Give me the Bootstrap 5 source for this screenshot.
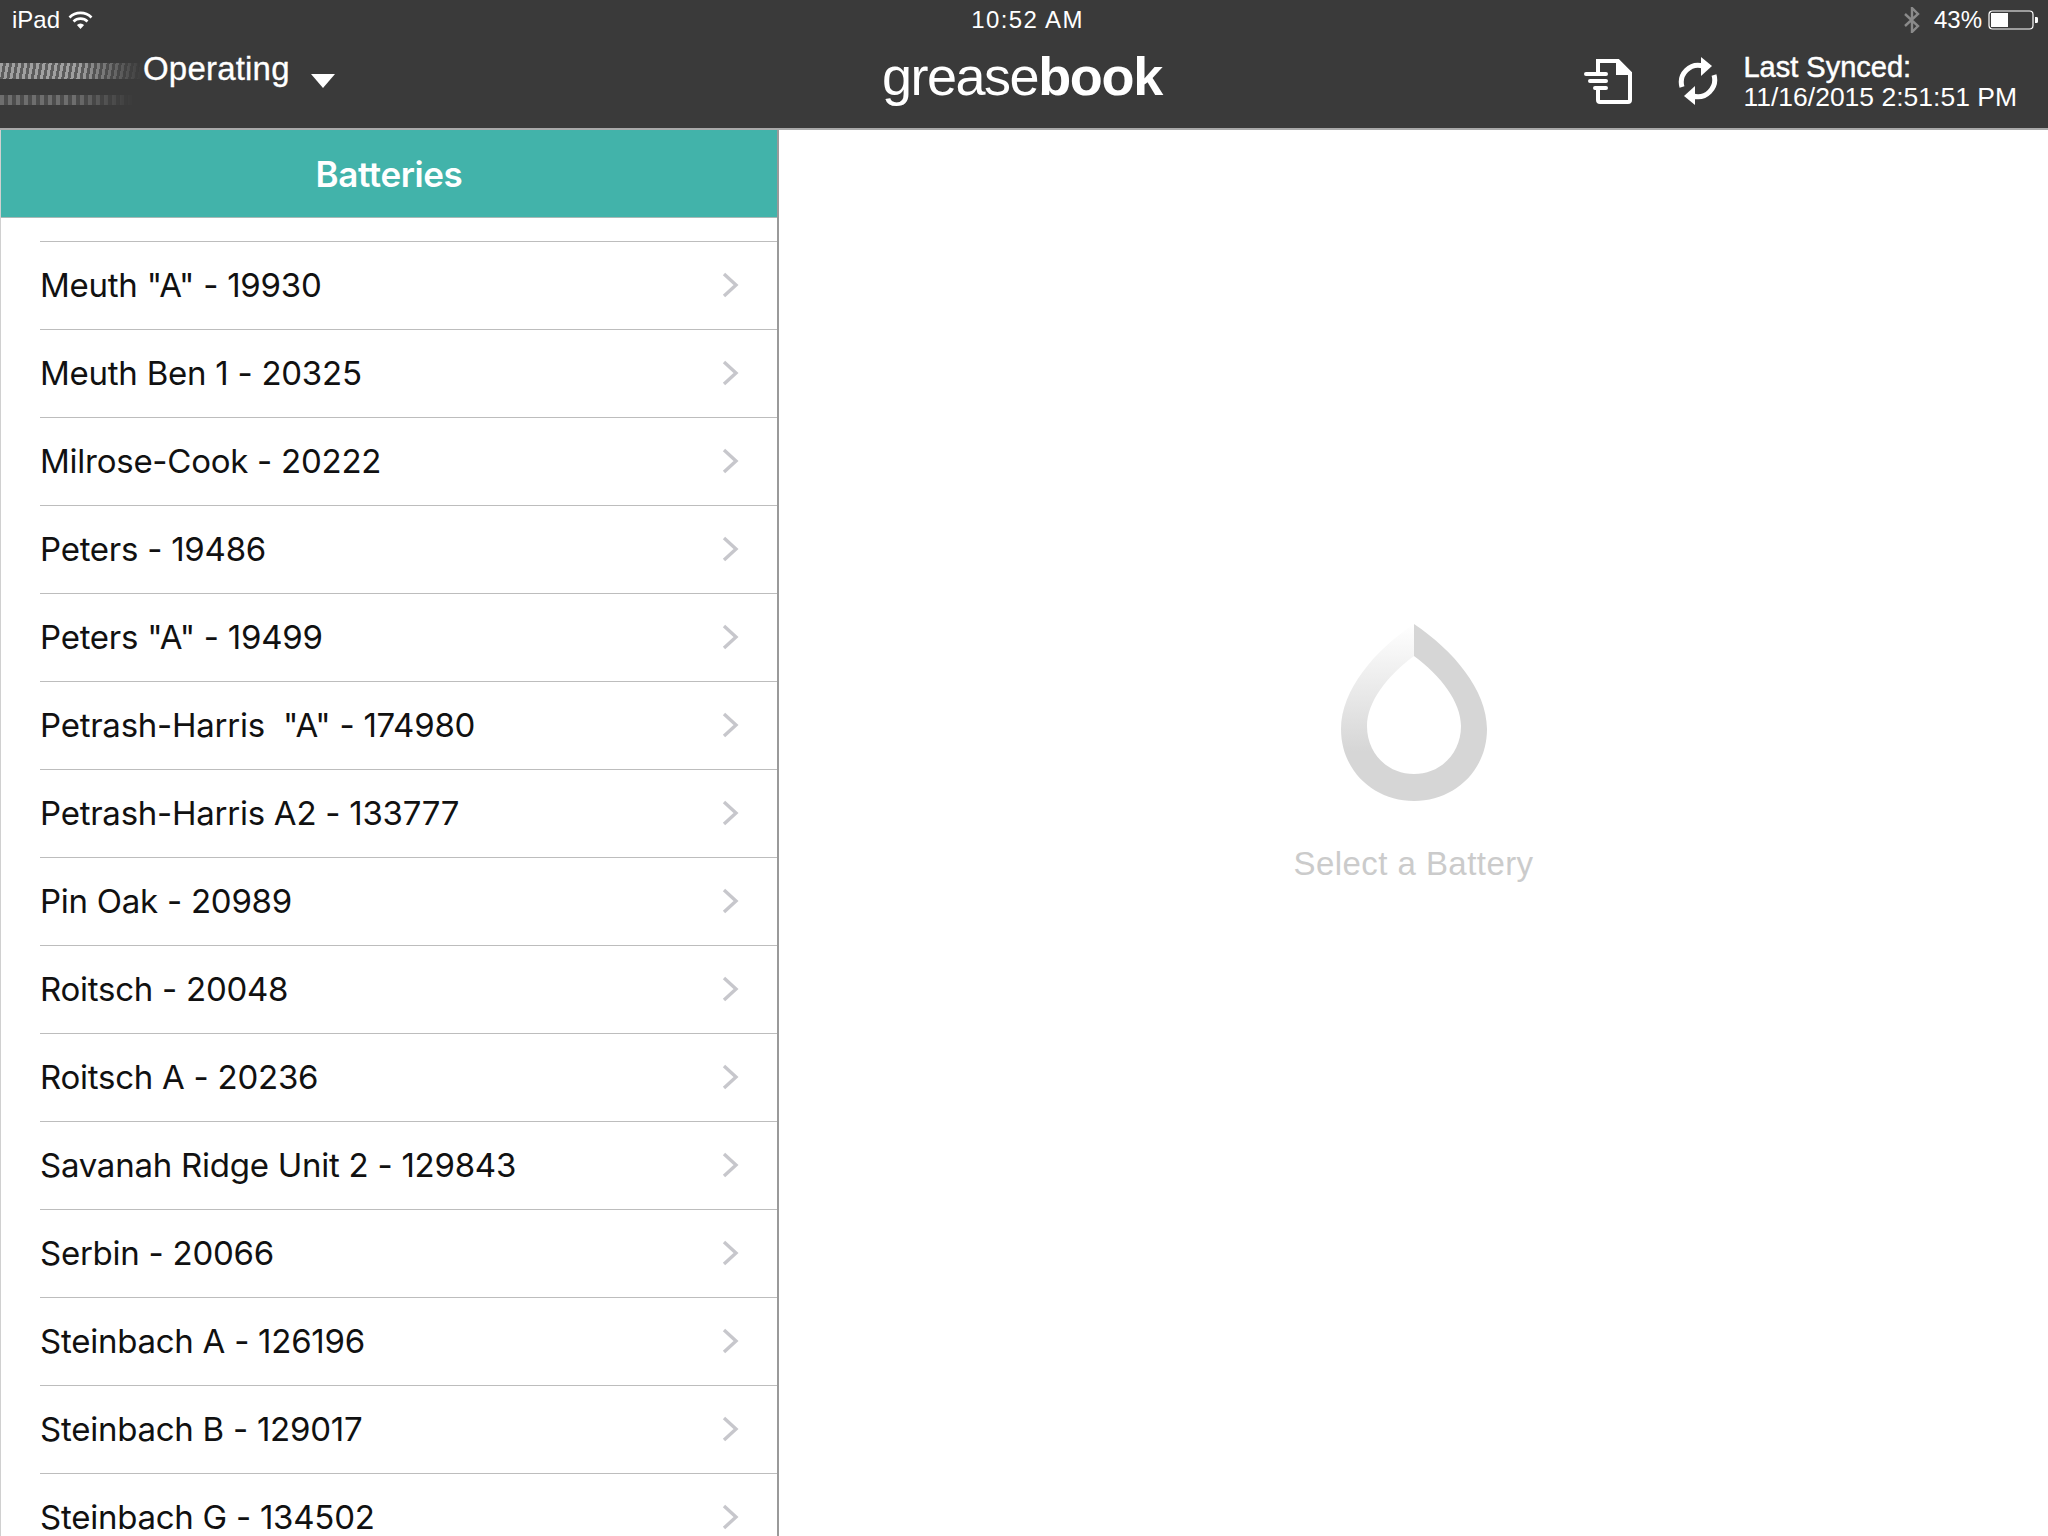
<!DOCTYPE html>
<html lang="en">
<head>
<meta charset="utf-8">
<title>greasebook</title>
<link href="https://cdn.jsdelivr.net/npm/bootstrap@5.3.0/dist/css/bootstrap.min.css" rel="stylesheet">
<style>
html,body{height:1536px;overflow:hidden;background:#fff}
body{font-family:"Liberation Sans",Arial,sans-serif}
.app-top{height:130px;background:#3a3a3a;border-bottom:2px solid #a9a9a9;color:#fff}
.status-row{height:40px;display:grid;grid-template-columns:1fr auto 1fr;padding:0 10px 0 12px;font-size:24px;line-height:40px}
.time-txt{margin-left:5px;letter-spacing:1.4px}
.pct-txt{margin:0 6px 0 14px}
.nav-row{height:88px;display:grid;grid-template-columns:1fr auto 1fr}
.ghost-wrap{width:143px;height:66px;padding-top:23px}
.ghost-a,.ghost-b{display:block;filter:blur(.7px);-webkit-mask-image:linear-gradient(90deg,#000 55%,transparent);mask-image:linear-gradient(90deg,#000 55%,transparent)}
.ghost-a{height:16px;background:repeating-linear-gradient(100deg,#a0a0a0 0 3px,#5c5c5c 3px 6px)}
.ghost-b{height:10px;width:134px;margin-top:16px;background:repeating-linear-gradient(90deg,#6e6e6e 0 4px,#4c4c4c 4px 8px)}
.op-txt{font-size:33px;line-height:36px;margin-top:11px;letter-spacing:.2px;-webkit-text-stroke:.3px #fff}
.caret-down{margin:34px 0 0 21px}
.logo-txt{font-size:54px;line-height:60px;letter-spacing:-1.5px;margin:6px 0 0 -4px}
.logo-txt b{letter-spacing:-1.3px}
.sync-txt{margin-left:24px;margin-right:31px;font-size:26.5px;line-height:30px;padding-top:12px;white-space:nowrap}
.sync-lbl{font-size:29px;line-height:30px;-webkit-text-stroke:.5px #fff}
.doc-ico{margin:18px 0 0 0}
.sync-ico{margin:17px 0 0 43px}
.side-pane{width:779px;height:1406px;overflow:hidden;border-left:1px solid #d0d0d0;border-right:2px solid #9a9a9a}
.side-head{height:88px;background:#42b3aa;color:#fff;font:600 35px/88px Inter,sans-serif;text-align:center;letter-spacing:-.4px;border-bottom:1px solid #a9b9b7}
.bat-list{margin-top:23px;border-radius:0}
.bat-list .bat-item{margin-left:39px;padding:0 37px 2px 0;height:88px;border:0;border-top:1px solid #bdbdbd;border-radius:0;font:400 33px/84px Inter,sans-serif;letter-spacing:-.25px;color:#111;white-space:pre}
.main-pane{height:1406px;padding-top:494px;color:#ccc}
.hint-txt{font-size:33px;line-height:40px;margin-top:43px;letter-spacing:.45px;color:#cbcbcb}
</style>
</head>
<body>
<header class="app-top">
  <div class="status-row">
    <div class="d-flex align-items-center gap-2">
      <span>iPad</span>
      <svg width="25" height="20" viewBox="0 0 25 20" fill="none" stroke="#fff" stroke-width="2.6"><path d="M1.5 7.5a15.500 15.500 0 0 1 22 0"/><path d="M5.5 11.5a10 10 0 0 1 14 0"/><path d="M12.5 19l-3.600-4a5 5 0 0 1 7.200 0z" fill="#fff" stroke="none"/></svg>
    </div>
    <div class="time-txt">10:52 AM</div>
    <div class="d-flex align-items-center justify-content-end">
      <svg width="16" height="26" viewBox="0 0 16 26" fill="none" stroke="#8a8a8a" stroke-width="2.4"><path d="M1 7l13 12-6 6V1l6 6L1 19"/></svg>
      <span class="pct-txt">43%</span>
      <svg width="50" height="20" viewBox="0 0 50 20"><rect x="1" y="1" width="44" height="18" rx="3.5" fill="none" stroke="#fff" stroke-width="1.2"/><rect x="3" y="3" width="17" height="14" fill="#fff"/><path d="M47 7h1.500a1.500 1.500 0 0 1 1.500 1.500v3a1.500 1.500 0 0 1-1.500 1.500H47z" fill="#fff"/></svg>
    </div>
  </div>
  <div class="nav-row">
    <div class="d-flex">
      <div class="ghost-wrap"><span class="ghost-a"></span><span class="ghost-b"></span></div>
      <span class="op-txt">Operating</span>
      <svg class="caret-down" width="24" height="14" viewBox="0 0 24 14"><path d="M0 0h24L12 14z" fill="#fff"/></svg>
    </div>
    <div class="logo-txt">grease<b>book</b></div>
    <div class="d-flex justify-content-end">
      <svg class="doc-ico" width="50" height="46" viewBox="0 0 50 46" fill="none" stroke="#fff"><path d="M14 14V3h20l12 12v27a2 2 0 0 1-2 2H16a2 2 0 0 1-2-2V31" stroke-width="4"/><path d="M32 3v14h14" fill="#fff" stroke="none"/><path d="M2 16h20M6 23h16M11 30h11" stroke-width="4" stroke-linecap="round"/></svg>
      <svg class="sync-ico" width="42" height="48" viewBox="0 0 42 48" fill="none" stroke="#fff" stroke-width="5"><path d="M5 30a17 17 0 0 1 21-21"/><path d="M37 18a17 17 0 0 1-21 21"/><path d="M24 0l11 9-11 10z" fill="#fff" stroke="none"/><path d="M18 48L7 39l11-10z" fill="#fff" stroke="none"/></svg>
      <div class="sync-txt"><div class="sync-lbl">Last Synced:</div><div>11/16/2015 2:51:51 PM</div></div>
    </div>
  </div>
</header>
<div class="d-flex">
  <aside class="side-pane flex-shrink-0">
    <div class="side-head">Batteries</div>
    <div class="list-group bat-list">
      <div class="list-group-item bat-item d-flex justify-content-between align-items-center"><span>Meuth "A" - 19930</span><svg width="18" height="26" viewBox="0 0 18 26" fill="none" stroke="#c7c7cc" stroke-width="3.400"><path d="M2 2l12 11L2 24"/></svg></div>
      <div class="list-group-item bat-item d-flex justify-content-between align-items-center"><span>Meuth Ben 1 - 20325</span><svg width="18" height="26" viewBox="0 0 18 26" fill="none" stroke="#c7c7cc" stroke-width="3.400"><path d="M2 2l12 11L2 24"/></svg></div>
      <div class="list-group-item bat-item d-flex justify-content-between align-items-center"><span>Milrose-Cook - 20222</span><svg width="18" height="26" viewBox="0 0 18 26" fill="none" stroke="#c7c7cc" stroke-width="3.400"><path d="M2 2l12 11L2 24"/></svg></div>
      <div class="list-group-item bat-item d-flex justify-content-between align-items-center"><span>Peters - 19486</span><svg width="18" height="26" viewBox="0 0 18 26" fill="none" stroke="#c7c7cc" stroke-width="3.400"><path d="M2 2l12 11L2 24"/></svg></div>
      <div class="list-group-item bat-item d-flex justify-content-between align-items-center"><span>Peters "A" - 19499</span><svg width="18" height="26" viewBox="0 0 18 26" fill="none" stroke="#c7c7cc" stroke-width="3.400"><path d="M2 2l12 11L2 24"/></svg></div>
      <div class="list-group-item bat-item d-flex justify-content-between align-items-center"><span>Petrash-Harris  "A" - 174980</span><svg width="18" height="26" viewBox="0 0 18 26" fill="none" stroke="#c7c7cc" stroke-width="3.400"><path d="M2 2l12 11L2 24"/></svg></div>
      <div class="list-group-item bat-item d-flex justify-content-between align-items-center"><span>Petrash-Harris A2 - 133777</span><svg width="18" height="26" viewBox="0 0 18 26" fill="none" stroke="#c7c7cc" stroke-width="3.400"><path d="M2 2l12 11L2 24"/></svg></div>
      <div class="list-group-item bat-item d-flex justify-content-between align-items-center"><span>Pin Oak - 20989</span><svg width="18" height="26" viewBox="0 0 18 26" fill="none" stroke="#c7c7cc" stroke-width="3.400"><path d="M2 2l12 11L2 24"/></svg></div>
      <div class="list-group-item bat-item d-flex justify-content-between align-items-center"><span>Roitsch - 20048</span><svg width="18" height="26" viewBox="0 0 18 26" fill="none" stroke="#c7c7cc" stroke-width="3.400"><path d="M2 2l12 11L2 24"/></svg></div>
      <div class="list-group-item bat-item d-flex justify-content-between align-items-center"><span>Roitsch A - 20236</span><svg width="18" height="26" viewBox="0 0 18 26" fill="none" stroke="#c7c7cc" stroke-width="3.400"><path d="M2 2l12 11L2 24"/></svg></div>
      <div class="list-group-item bat-item d-flex justify-content-between align-items-center"><span>Savanah Ridge Unit 2 - 129843</span><svg width="18" height="26" viewBox="0 0 18 26" fill="none" stroke="#c7c7cc" stroke-width="3.400"><path d="M2 2l12 11L2 24"/></svg></div>
      <div class="list-group-item bat-item d-flex justify-content-between align-items-center"><span>Serbin - 20066</span><svg width="18" height="26" viewBox="0 0 18 26" fill="none" stroke="#c7c7cc" stroke-width="3.400"><path d="M2 2l12 11L2 24"/></svg></div>
      <div class="list-group-item bat-item d-flex justify-content-between align-items-center"><span>Steinbach A - 126196</span><svg width="18" height="26" viewBox="0 0 18 26" fill="none" stroke="#c7c7cc" stroke-width="3.400"><path d="M2 2l12 11L2 24"/></svg></div>
      <div class="list-group-item bat-item d-flex justify-content-between align-items-center"><span>Steinbach B - 129017</span><svg width="18" height="26" viewBox="0 0 18 26" fill="none" stroke="#c7c7cc" stroke-width="3.400"><path d="M2 2l12 11L2 24"/></svg></div>
      <div class="list-group-item bat-item d-flex justify-content-between align-items-center"><span>Steinbach G - 134502</span><svg width="18" height="26" viewBox="0 0 18 26" fill="none" stroke="#c7c7cc" stroke-width="3.400"><path d="M2 2l12 11L2 24"/></svg></div>
    </div>
  </aside>
  <main class="main-pane flex-grow-1 d-flex flex-column align-items-center">
    <svg width="146" height="177" viewBox="0 0 146 177">
      <defs><linearGradient id="dropFade" x1="0" y1="0" x2="0" y2="1"><stop offset="0" stop-color="#fff"/><stop offset=".72" stop-color="#d6d6d6"/></linearGradient></defs>
      <path d="M73 0C112 26 146 66 146 105C146 147 113 177 73 177V150C99 150 120 130 120 102C120 78 100 52 73 32Z" fill="#d6d6d6"/>
      <path d="M73 0C34 26 0 66 0 105C0 147 33 177 73 177V150C47 150 26 130 26 102C26 78 46 52 73 32Z" fill="url(#dropFade)"/>
    </svg>
    <div class="hint-txt">Select a Battery</div>
  </main>
</div>
<script src="https://cdn.jsdelivr.net/npm/bootstrap@5.3.0/dist/js/bootstrap.bundle.min.js"></script>
</body>
</html>
